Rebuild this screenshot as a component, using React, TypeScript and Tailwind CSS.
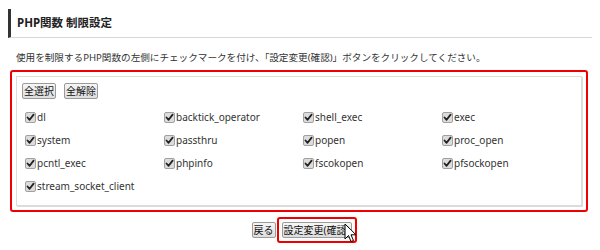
import React from "react";

const items = [
  "dl", "backtick_operator", "shell_exec", "exec",
  "system", "passthru", "popen", "proc_open",
  "pcntl_exec", "phpinfo", "fscokopen", "pfsockopen",
  "stream_socket_client",
];

function Check() {
  return (
    <span className="inline-flex items-center justify-center w-[11px] h-[11px] shrink-0 rounded-[2px] border border-[#a0a0a0] bg-[#dcdcdc]">
      <svg width="9" height="9" viewBox="0 0 9 9">
        <path d="M1.5 4.5 L3.6 6.8 L7.6 1.6" fill="none" stroke="#222" strokeWidth="1.8" strokeLinecap="round" strokeLinejoin="round" />
      </svg>
    </span>
  );
}

function Btn({ children }: { children: React.ReactNode }) {
  return (
    <span className="inline-flex items-center h-[16px] px-[1px] border border-[#9a9a9a] rounded-[2px] bg-gradient-to-b from-[#f6f6f6] to-[#dedede] text-[10px] text-[#111] leading-none">
      {children}
    </span>
  );
}

export default function App() {
  return (
    <div
      className="w-[600px] h-[250px] bg-white overflow-hidden text-[#333]"
      style={{ fontFamily: '"Noto Sans", "Noto Sans CJK JP", sans-serif' }}
    >
      <div className="mx-[8px] mt-[9px] h-[29px] border-l-[3px] border-[#333] border-b border-b-[#d8d8d8] pl-[6px] flex items-center">
        <span className="text-[11.5px] font-bold text-[#222]">PHP関数 制限設定</span>
      </div>
      <div className="mt-[12px] pl-[16px] text-[9.6px] leading-[16px] text-[#333]">
        使用を制限するPHP関数の左側にチェックマークを付け、「設定変更(確認)」ボタンをクリックしてください。
      </div>
      <div className="mt-[4px] ml-[10px] w-[578px] h-[142px] border-2 border-[#ee0000] rounded-[3px] p-[4px]">
        <div className="h-full border border-[#dcdcdc] shadow-[1px_1px_0_#dcdcdc] pt-[6px] pl-[5px]">
          <div className="flex gap-[8px]">
            <Btn>全選択</Btn>
            <Btn>全解除</Btn>
          </div>
          <div className="mt-[7px] pl-[3px] grid grid-cols-[139px_139px_139px_139px]">
            {items.map((it) => (
              <div key={it} className="h-[23px] flex items-center gap-[1px] text-[10px] text-[#333]">
                <Check />
                <span>{it}</span>
              </div>
            ))}
          </div>
        </div>
      </div>
      <div className="mt-[5px] flex justify-center items-center gap-[1px] pl-[8px]">
        <Btn>戻る</Btn>
        <div className="relative h-[26px] border-2 border-[#ee0000] rounded-[3px] px-[3px] flex items-center">
          <Btn>設定変更(確認)</Btn>
          <svg className="absolute left-[65px] top-[4px]" width="14" height="21" viewBox="0 0 14 21">
            <path d="M1 1 L1 16 L4.5 12.5 L7 18.5 L9.5 17.5 L7 11.8 L12 11.8 Z" fill="#fff" stroke="#000" strokeWidth="1" strokeLinejoin="round" />
          </svg>
        </div>
      </div>
    </div>
  );
}
